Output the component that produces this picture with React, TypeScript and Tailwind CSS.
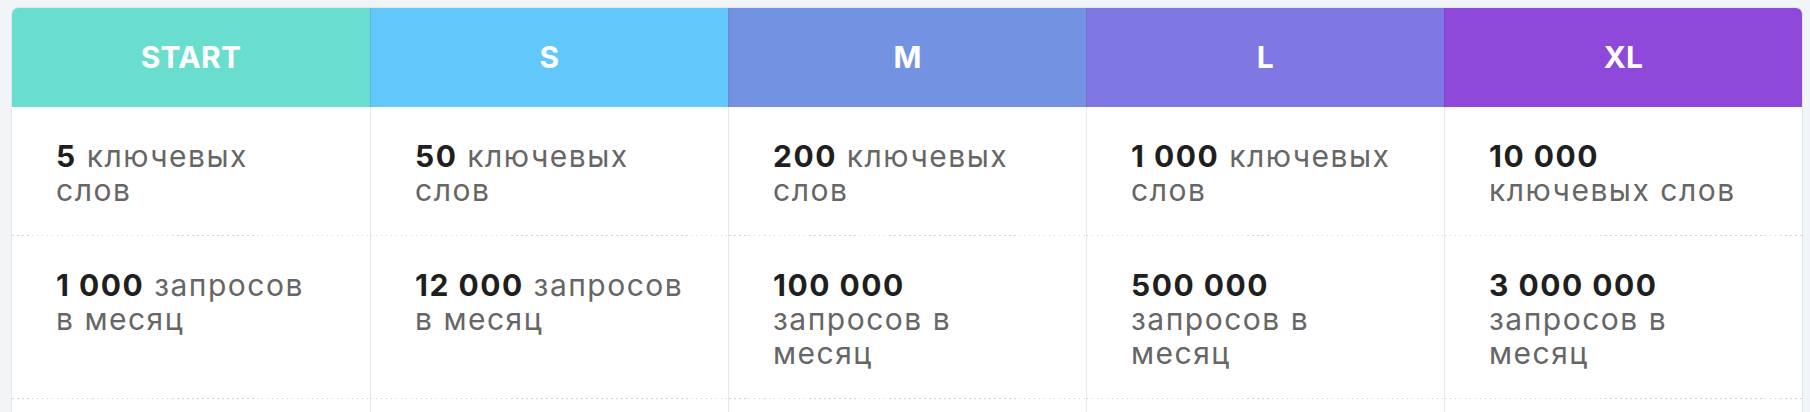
import React from 'react'

interface Plan {
  name: string
  color: string
  keywords: React.ReactNode
  requests: React.ReactNode
}

const NB = '\u00A0'

const Num = ({ children }: { children: React.ReactNode }) => (
  <span className="font-bold text-[#1f1f1f]">{children}</span>
)

const plans: Plan[] = [
  {
    name: 'START',
    color: 'bg-[#6adece]',
    keywords: (<><Num>5</Num> ключевых<br />слов</>),
    requests: (<><Num>{`1${NB}000`}</Num> запросов<br />в месяц</>),
  },
  {
    name: 'S',
    color: 'bg-[#62c7fa]',
    keywords: (<><Num>50</Num> ключевых<br />слов</>),
    requests: (<><Num>{`12${NB}000`}</Num> запросов<br />в месяц</>),
  },
  {
    name: 'M',
    color: 'bg-[#7393e2]',
    keywords: (<><Num>200</Num> ключевых<br />слов</>),
    requests: (<><Num>{`100${NB}000`}</Num><br />запросов в<br />месяц</>),
  },
  {
    name: 'L',
    color: 'bg-[#8078e2]',
    keywords: (<><Num>{`1${NB}000`}</Num> ключевых<br />слов</>),
    requests: (<><Num>{`500${NB}000`}</Num><br />запросов в<br />месяц</>),
  },
  {
    name: 'XL',
    color: 'bg-[#8e48da]',
    keywords: (<><Num>{`10${NB}000`}</Num><br />ключевых слов</>),
    requests: (<><Num>{`3${NB}000${NB}000`}</Num><br />запросов в<br />месяц</>),
  },
]

const rows: (keyof Pick<Plan, 'keywords' | 'requests'>)[] = ['keywords', 'requests']

export default function App() {
  return (
    <div className="h-[412px] overflow-hidden bg-[#f1f5f8] pt-[7px] pl-[11px] pr-[7px] font-['Inter',sans-serif]">
      <div className="rounded-t-[7px] border border-[#e2e6ea] bg-white overflow-hidden">
        {/* Шапка тарифов */}
        <div className="grid grid-cols-5">
          {plans.map((plan, i) => (
            <div
              key={plan.name}
              className={`h-[99px] flex items-center justify-center text-white text-[30px] font-bold tracking-[0.01em] ${plan.color} ${i > 0 ? 'border-l border-black/[0.08]' : ''}`}
            >
              {plan.name}
            </div>
          ))}
        </div>

        {/* Строки с лимитами */}
        {rows.map((row, r) => (
          <div key={row} className="grid grid-cols-5">
            {plans.map((plan, i) => (
              <div key={plan.name} className={i > 0 ? 'border-l border-[#e8e8e8]' : ''}>
                {r > 0 && (
                  <div className="h-px bg-[repeating-linear-gradient(to_right,#d2d2d2_0_1.5px,transparent_1.5px_5px)]" />
                )}
                <div className="pl-11 pr-6 pt-8 pb-[28px] text-[30px] leading-[34px] tracking-[0.05em] text-[#666666] whitespace-nowrap">
                  {plan[row]}
                </div>
              </div>
            ))}
          </div>
        ))}

        <div className="grid grid-cols-5 h-[120px]">
          {plans.map((plan, i) => (
            <div key={plan.name} className={i > 0 ? 'border-l border-[#e8e8e8]' : ''}>
              <div className="h-px bg-[repeating-linear-gradient(to_right,#d2d2d2_0_1.5px,transparent_1.5px_5px)]" />
            </div>
          ))}
        </div>
      </div>
    </div>
  )
}
